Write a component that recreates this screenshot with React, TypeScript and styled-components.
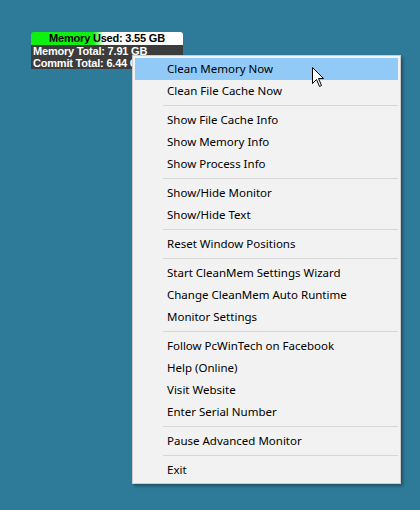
import React from 'react';
import styled, { createGlobalStyle } from 'styled-components';

const GlobalStyle = createGlobalStyle`
    html, body {
        margin: 0;
        padding: 0;
        background: #2e7b99;
    }
    #root {
        width: 420px;
        height: 510px;
    }
`;

const Desktop = styled.div`
    position: relative;
    width: 420px;
    height: 510px;
    overflow: hidden;
    background: #2e7b99;
`;

const Monitor = styled.div`
    position: absolute;
    left: 31px;
    top: 32px;
    width: 152px;
    display: flex;
    flex-direction: column;
    font-family: 'Liberation Sans', Arial, sans-serif;
    font-weight: bold;
    font-size: 11px;
    letter-spacing: -0.2px;
`;

const UsedBar = styled.div<{ $percent: number }>`
    height: 13px;
    border-radius: 3px 3px 0 0;
    background: linear-gradient(
        to right,
        #10f010 0%,
        #10f010 ${({ $percent }) => $percent - 6}%,
        #ffffff ${({ $percent }) => $percent + 1}%,
        #ffffff 100%
    );
    color: #000;
    display: flex;
    align-items: center;
    justify-content: center;
    line-height: 13px;
`;

const StatRow = styled.div`
    height: 12px;
    line-height: 12px;
    background: #3c3c3c;
    color: #fff;
    padding-left: 2px;
    white-space: nowrap;
`;

const Menu = styled.div`
    position: absolute;
    left: 132px;
    top: 55px;
    width: 263px;
    padding: 2px;
    background: #f2f2f2;
    border: 1px solid #cccccc;
    box-shadow: 2px 2px 3px rgba(0, 0, 0, 0.35);
    display: flex;
    flex-direction: column;
    font-family: 'Segoe UI', 'Noto Sans', sans-serif;
    font-size: 11.5px;
    color: #000;
`;

const Item = styled.div<{ $active?: boolean }>`
    height: 22px;
    display: flex;
    align-items: center;
    padding-left: 32px;
    padding-bottom: 1px;
    box-sizing: border-box;
    background: ${({ $active }) => ($active ? '#91c9f7' : 'transparent')};
    white-space: nowrap;
`;

const Separator = styled.div`
    height: 1px;
    margin: 3px 0 3px 28px;
    background: #d7d7d7;
`;

const Cursor = styled.svg`
    position: absolute;
    left: 312px;
    top: 67px;
`;

const groups: string[][] = [
    ['Clean Memory Now', 'Clean File Cache Now'],
    ['Show File Cache Info', 'Show Memory Info', 'Show Process Info'],
    ['Show/Hide Monitor', 'Show/Hide Text'],
    ['Reset Window Positions'],
    ['Start CleanMem Settings Wizard', 'Change CleanMem Auto Runtime', 'Monitor Settings'],
    ['Follow PcWinTech on Facebook', 'Help (Online)', 'Visit Website', 'Enter Serial Number'],
    ['Pause Advanced Monitor'],
    ['Exit'],
];

const App = () => {
    return (
        <Desktop>
            <GlobalStyle />
            <Monitor>
                <UsedBar $percent={47}>Memory Used: 3.55 GB</UsedBar>
                <StatRow>Memory Total: 7.91 GB</StatRow>
                <StatRow>Commit Total: 6.44 GB</StatRow>
            </Monitor>
            <Menu>
                {groups.map((group, gi) => (
                    <React.Fragment key={gi}>
                        {gi > 0 && <Separator />}
                        {group.map((label, i) => (
                            <Item key={label} $active={gi === 0 && i === 0}>{label}</Item>
                        ))}
                    </React.Fragment>
                ))}
            </Menu>
            <Cursor width="13" height="21" viewBox="0 0 13 21">
                <path
                    d="M0.5 0.5 L0.5 16.5 L4.5 12.5 L7.5 19.5 L9.5 18.5 L6.5 11.5 L11.5 11.5 Z"
                    fill="#fff"
                    stroke="#000"
                    strokeWidth="1"
                    strokeLinejoin="miter"
                />
            </Cursor>
        </Desktop>
    );
};

export default App;
